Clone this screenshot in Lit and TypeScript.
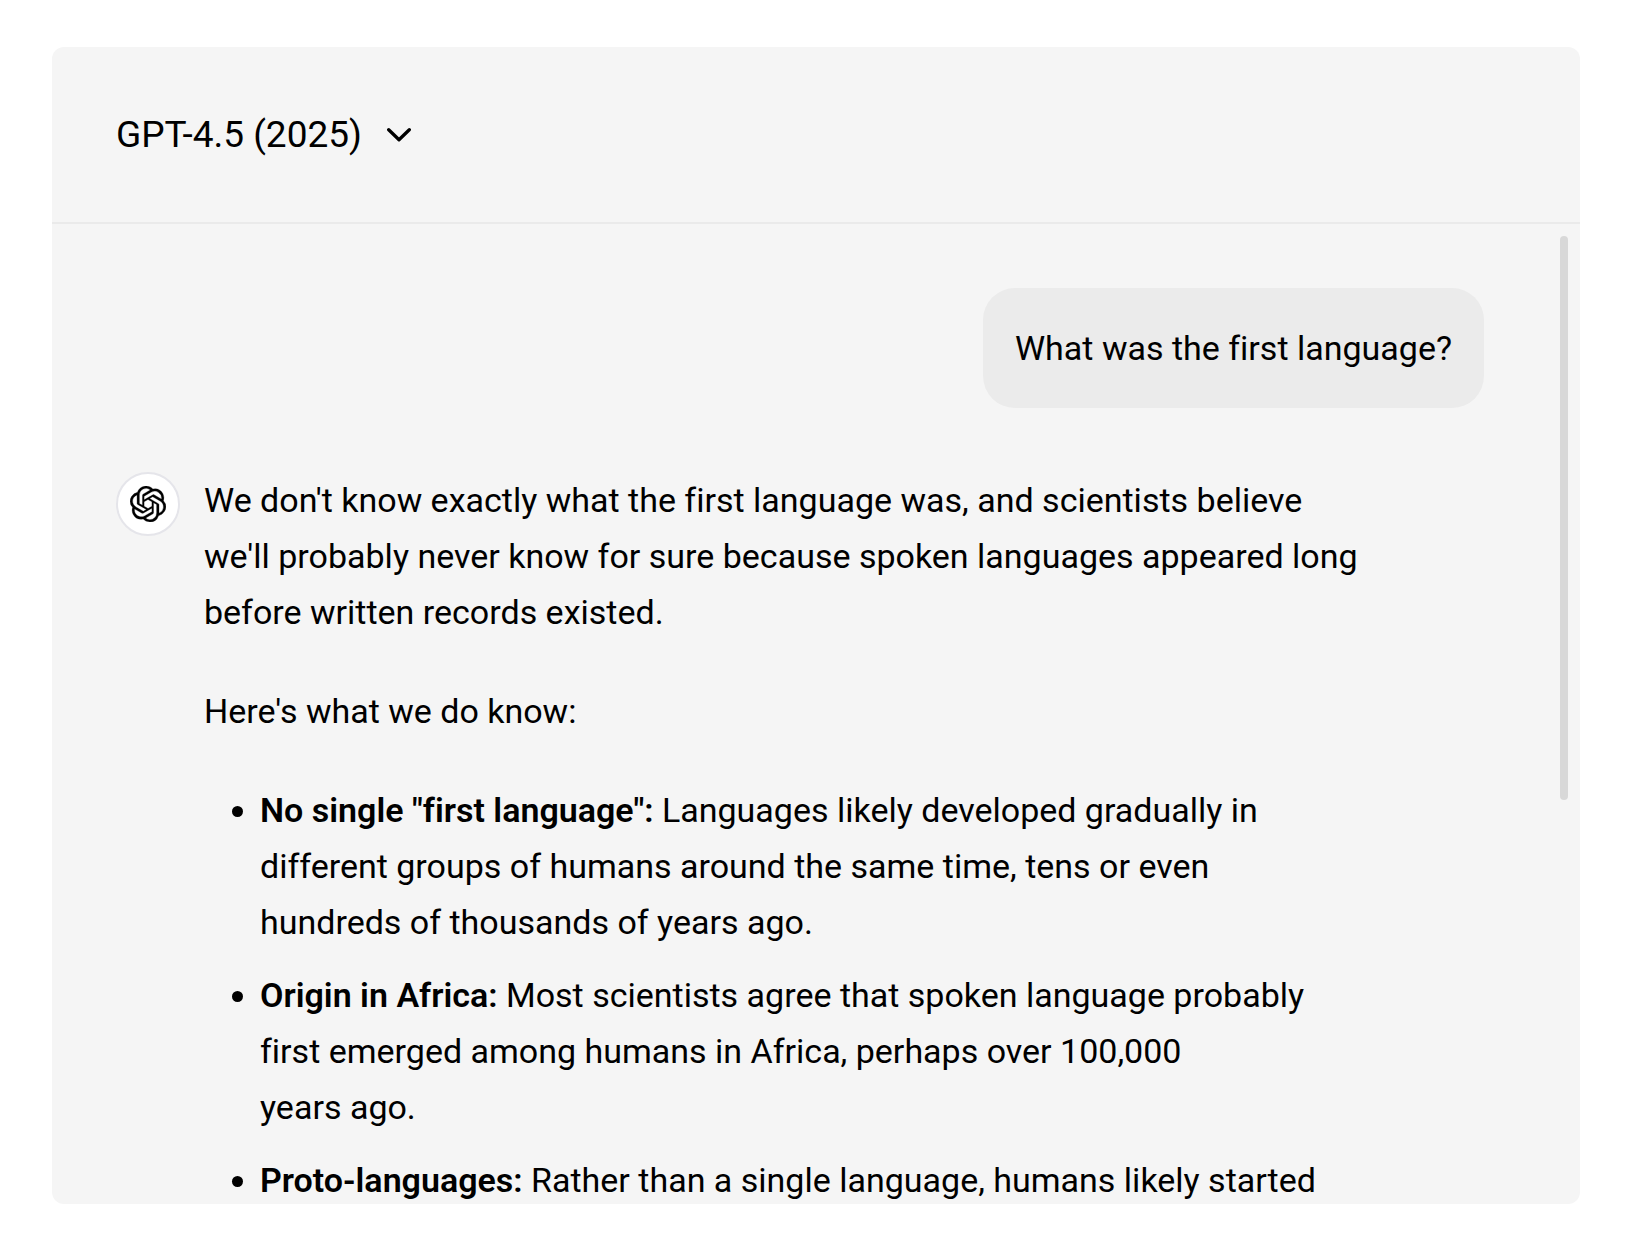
import { LitElement, html, css } from "lit";
import { customElement, property } from "lit/decorators.js";

interface Point {
  label: string;
  text: string;
}

const MODELS = ["GPT-4.5 (2025)"];

const QUESTION = "What was the first language?";

const INTRO = [
  "We don't know exactly what the first language was, and scientists believe we'll probably never know for sure because spoken languages appeared long before written records existed.",
  "Here's what we do know:",
];

const POINTS: Point[] = [
  {
    label: 'No single "first language":',
    text: "Languages likely developed gradually in different groups of humans around the same time, tens or even hundreds of thousands of years\u00a0ago.",
  },
  {
    label: "Origin in Africa:",
    text: "Most scientists agree that spoken language probably first emerged among humans in Africa, perhaps over 100,000 years\u00a0ago.",
  },
  {
    label: "Proto-languages:",
    text: "Rather than a single language, humans likely started",
  },
];

@customElement("model-picker")
export class ModelPicker extends LitElement {
  static styles = css`
    :host {
      display: block;
    }
    .picker {
      display: grid;
      align-items: center;
    }
    .select,
    .chevron {
      grid-area: 1 / 1;
    }
    .select {
      appearance: none;
      margin: 0;
      padding: 0 49px 0 0;
      border: 0;
      border-radius: 8px;
      background: transparent;
      color: #000;
      font: inherit;
      font-size: 37px;
      line-height: 48px;
      cursor: pointer;
    }
    .chevron {
      justify-self: end;
      width: 24px;
      height: 16px;
      pointer-events: none;
    }
  `;

  render() {
    return html`
      <div class="picker">
        <select class="select" aria-label="Model">
          ${MODELS.map((m) => html`<option>${m}</option>`)}
        </select>
        <svg class="chevron" viewBox="0 0 24 16" fill="none" aria-hidden="true">
          <path
            d="M1.7 2.7 12 12.7 22.3 2.7"
            stroke="#000"
            stroke-width="3.3"
            stroke-linecap="round"
            stroke-linejoin="round"
          />
        </svg>
      </div>
    `;
  }
}

@customElement("assistant-avatar")
export class AssistantAvatar extends LitElement {
  static styles = css`
    :host {
      display: block;
      flex: none;
    }
    .circle {
      display: grid;
      place-items: center;
      box-sizing: border-box;
      width: 64px;
      height: 64px;
      border: 2px solid #e5e5ea;
      border-radius: 50%;
      background: #fff;
    }
    .logo {
      width: 36px;
      height: 36px;
    }
  `;

  render() {
    return html`
      <div class="circle">
        <svg class="logo" viewBox="0 0 24 24" fill="#000" stroke="#000" stroke-width="0.2" aria-hidden="true">
          <path
            d="M22.2819 9.8211a5.9847 5.9847 0 0 0-.5157-4.9108 6.0462 6.0462 0 0 0-6.5098-2.9A6.0651 6.0651 0 0 0 4.9807 4.1818a5.9847 5.9847 0 0 0-3.9977 2.9 6.0462 6.0462 0 0 0 .7427 7.0966 5.98 5.98 0 0 0 .511 4.9107 6.051 6.051 0 0 0 6.5146 2.9001A5.9847 5.9847 0 0 0 13.2599 24a6.0557 6.0557 0 0 0 5.7718-4.2058 5.9894 5.9894 0 0 0 3.9977-2.9001 6.0557 6.0557 0 0 0-.7475-7.0729zm-9.022 12.6081a4.4755 4.4755 0 0 1-2.8764-1.0408l.1419-.0804 4.7783-2.7582a.7948.7948 0 0 0 .3927-.6813v-6.7369l2.02 1.1686a.071.071 0 0 1 .038.052v5.5826a4.504 4.504 0 0 1-4.4945 4.4944zm-9.6607-4.1254a4.4708 4.4708 0 0 1-.5346-3.0137l.142.0852 4.783 2.7582a.7712.7712 0 0 0 .7806 0l5.8428-3.3685v2.3324a.0804.0804 0 0 1-.0332.0615L9.74 19.9502a4.4992 4.4992 0 0 1-6.1408-1.6464zM2.3408 7.8956a4.485 4.485 0 0 1 2.3655-1.9728V11.6a.7664.7664 0 0 0 .3879.6765l5.8144 3.3543-2.0201 1.1685a.0757.0757 0 0 1-.071 0l-4.8303-2.7865A4.504 4.504 0 0 1 2.3408 7.872zm16.5963 3.8558L13.1038 8.364 15.1192 7.2a.0757.0757 0 0 1 .071 0l4.8303 2.7913a4.4944 4.4944 0 0 1-.6765 8.1042v-5.6772a.79.79 0 0 0-.407-.667zm2.0107-3.0231l-.142-.0852-4.7735-2.7818a.7759.7759 0 0 0-.7854 0L9.409 9.2297V6.8974a.0662.0662 0 0 1 .0284-.0615l4.8303-2.7866a4.4992 4.4992 0 0 1 6.6802 4.66zM8.3065 12.863l-2.02-1.1638a.0804.0804 0 0 1-.038-.0567V6.0742a4.4992 4.4992 0 0 1 7.3757-3.4537l-.142.0805L8.704 5.459a.7948.7948 0 0 0-.3927.6813zm1.0976-2.3654l2.602-1.4998 2.6069 1.4998v2.9994l-2.5974 1.4997-2.6067-1.4997Z"
          />
        </svg>
      </div>
    `;
  }
}

@customElement("assistant-message")
export class AssistantMessage extends LitElement {
  @property({ attribute: false }) intro: string[] = [];
  @property({ attribute: false }) points: Point[] = [];

  static styles = css`
    :host {
      display: flex;
      align-items: flex-start;
      gap: 24px;
    }
    .content {
      flex: 1;
      max-width: 1160px;
    }
    .paragraph {
      margin: 0 0 43px;
    }
    .points {
      display: flex;
      flex-direction: column;
      gap: 17px;
      margin: 0;
      padding: 0 24px 0 56px;
    }
    .label {
      font-weight: 600;
    }
  `;

  render() {
    return html`
      <assistant-avatar></assistant-avatar>
      <div class="content">
        ${this.intro.map((p) => html`<p class="paragraph">${p}</p>`)}
        <ul class="points">
          ${this.points.map(
            (p) => html`<li><strong class="label">${p.label}</strong> ${p.text}</li>`
          )}
        </ul>
      </div>
    `;
  }
}

@customElement("app-root")
export class AppRoot extends LitElement {
  static styles = css`
    :host {
      display: flex;
      box-sizing: border-box;
      height: 100vh;
      padding: 47px 52px 48px;
      background: #fff;
      color: #000;
      font-family: Roboto, "Liberation Sans", sans-serif;
      font-size: 34px;
      font-variant-ligatures: none;
      line-height: 56px;
    }
    .card {
      display: flex;
      flex: 1;
      flex-direction: column;
      min-width: 0;
      overflow: hidden;
      border-radius: 12px;
      background: #f5f5f5;
    }
    .header {
      display: flex;
      align-items: center;
      padding: 64px 64px 63px;
      border-bottom: 2px solid #eaeaea;
    }
    .body {
      position: relative;
      display: flex;
      flex: 1;
      min-height: 0;
    }
    .messages {
      display: flex;
      flex: 1;
      flex-direction: column;
      gap: 64px;
      padding: 64px 96px 0 64px;
      overflow-y: auto;
      scrollbar-width: none;
    }
    .question {
      align-self: flex-end;
      padding: 32px;
      border-radius: 32px;
      background: #ebebeb;
    }
    .track {
      position: absolute;
      inset: 12px 12px 12px auto;
      width: 8px;
      pointer-events: none;
    }
    .thumb {
      height: 59%;
      border-radius: 4px;
      background: #d8d8d8;
    }
  `;

  render() {
    return html`
      <main class="card">
        <header class="header">
          <model-picker></model-picker>
        </header>
        <div class="body">
          <div class="messages">
            <div class="question">${QUESTION}</div>
            <assistant-message .intro=${INTRO} .points=${POINTS}></assistant-message>
          </div>
          <div class="track"><div class="thumb"></div></div>
        </div>
      </main>
    `;
  }
}
